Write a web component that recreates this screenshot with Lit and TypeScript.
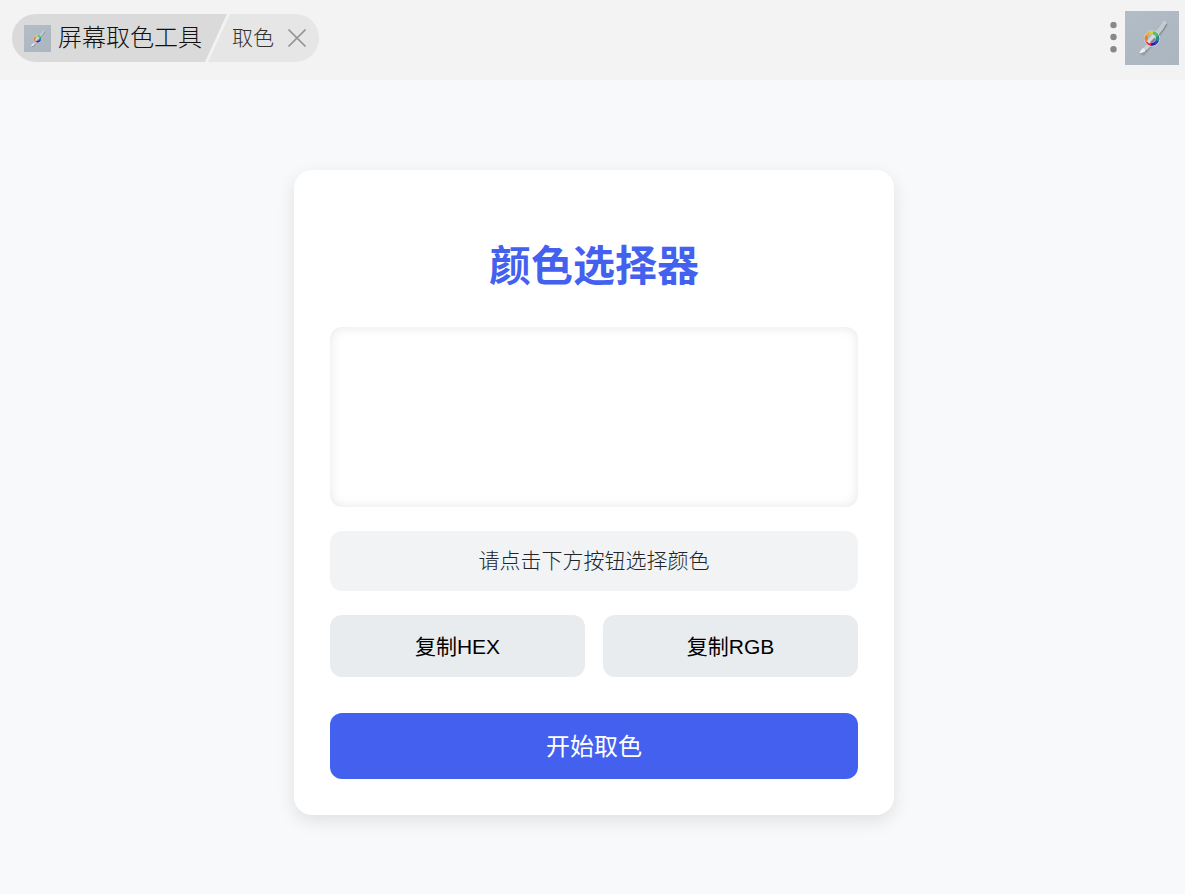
import { LitElement, html, css } from "lit";
import { customElement } from "lit/decorators.js";

@customElement("brush-logo")
class BrushLogo extends LitElement {
  static styles = css`
    :host { display: block; flex: none; }
    svg { display: block; width: 100%; height: 100%; }
  `;

  render() {
    return html`
      <svg viewBox="0 0 54 54" aria-hidden="true">
        <defs>
          <linearGradient id="bg" x1="0" y1="0" x2="0.6" y2="1">
            <stop offset="0" stop-color="#b3bdc8" />
            <stop offset="1" stop-color="#acb6c1" />
          </linearGradient>
          <filter id="soft" x="-30%" y="-30%" width="160%" height="160%">
            <feGaussianBlur stdDeviation="0.9" />
          </filter>
        </defs>
        <rect width="54" height="54" fill="url(#bg)" />
        <path d="M40 13 L30 28 L18 42" fill="none" stroke="#77818b" stroke-width="4.500" stroke-linecap="round" opacity="0.6" filter="url(#soft)" />
        <path d="M39.500 12 L36.500 17 L28 27.500" fill="none" stroke="#c3cad0" stroke-width="4.800" stroke-linecap="round" />
        <path d="M41.500 13.500 L38.500 18.500 L31 28" fill="none" stroke="#818a93" stroke-width="1.200" stroke-linecap="round" />
        <path d="M24 31 L29 32 C26 36 23 39 20 40.500 C18 41.500 16 42.200 14.300 42 C15.500 39.500 17 37.500 19.500 35.500 Z" fill="#c9cfd4" />
        <path d="M14.300 42 C15.500 39.500 17 37.500 19 37 L20.500 40 C18 41.500 16 42.200 14.300 42 Z" fill="#eceff1" />
        <path d="M29 32 C26 36 23 39 20 40.500" fill="none" stroke="#818a93" stroke-width="1" />
        <g transform="translate(27 27.500)" fill="none">
          <circle r="7.700" stroke="#ccd2d6" stroke-width="1" />
          <g stroke-width="3">
            <path d="M-5.200 -2.600 A5.800 5.800 0 0 1 -2.500 -5.230" stroke="#f0ad35" />
            <path d="M-2.500 -5.230 A5.800 5.800 0 0 1 2 -5.450" stroke="#d5d43a" />
            <path d="M2 -5.450 A5.800 5.800 0 0 1 5.450 -2" stroke="#3dba58" />
            <path d="M5.450 -2 A5.800 5.800 0 0 1 5.450 2" stroke="#1b8f93" />
            <path d="M5.450 2 A5.800 5.800 0 0 1 3.500 4.630" stroke="#1c48c4" />
            <path d="M3.500 4.630 A5.800 5.800 0 0 1 -1 5.710" stroke="#2f1fa8" />
            <path d="M-1 5.710 A5.800 5.800 0 0 1 -4.800 3.250" stroke="#e0224e" />
            <path d="M-4.800 3.250 A5.800 5.800 0 0 1 -5.200 -2.600" stroke="#f07a35" />
          </g>
          <path d="M3 -4.500 L-0.500 0 L-4 4" stroke="#d3d9dd" stroke-width="3.600" />
          <path d="M3 0 L-1 4" stroke="#7f8992" stroke-width="1.800" />
          <path d="M1 -5.700 A5.800 5.800 0 0 1 5 -2.900" stroke="#52c065" stroke-width="3" />
        </g>
      </svg>
    `;
  }
}

@customElement("app-root")
class AppRoot extends LitElement {
  static styles = css`
    :host {
      display: flex;
      flex-direction: column;
      min-height: 100vh;
      background: #f8f9fb;
      font-family: "Liberation Sans", "Noto Sans CJK SC", sans-serif;
      color: #111;
    }
    * { box-sizing: border-box; }
    button { font: inherit; border: 0; cursor: pointer; }
    .bar {
      display: flex;
      align-items: center;
      justify-content: space-between;
      height: 80px;
      padding: 0 6px 4px 12px;
      background: #f3f3f3;
    }
    .pill {
      display: flex;
      height: 48px;
      border-radius: 24px;
      overflow: hidden;
      font-weight: 300;
      line-height: 50px;
    }
    .plugin {
      display: flex;
      align-items: center;
      gap: 7px;
      padding: 0 25px 0 12px;
      background: #dadada;
      clip-path: polygon(0 0, 100% 0, calc(100% - 22px) 100%, 0 100%);
      font-size: 24px;
    }
    .plugin brush-logo { width: 27px; height: 27px; }
    .command {
      display: flex;
      align-items: center;
      gap: 14px;
      margin-left: -19px;
      padding: 0 13px 0 24px;
      background: #e6e6e6;
      clip-path: polygon(22px 0, 100% 0, 100% 100%, 0 100%);
      font-size: 21px;
      color: #333;
    }
    .close { display: block; padding: 0; background: none; }
    .close svg { display: block; width: 18px; height: 18px; }
    .actions { display: flex; align-items: center; gap: 8px; }
    .more { padding: 0; background: none; }
    .more svg { display: block; width: 7px; height: 32px; }
    .actions brush-logo { width: 54px; height: 54px; }

    main {
      display: flex;
      flex: 1;
      justify-content: center;
      align-items: flex-start;
      padding: 90px 12px 36px 15px;
    }
    .card {
      width: 100%;
      max-width: 600px;
      padding: 36px;
      border-radius: 18px;
      background: #fff;
      box-shadow: 0 6px 18px rgba(0, 0, 0, 0.1);
      text-align: center;
    }
    h1 {
      margin: 30px 0;
      font-size: 42px;
      line-height: 61px;
      font-weight: 700;
      color: #4361ee;
    }
    .preview {
      height: 180px;
      border-radius: 12px;
      background: #fff;
      box-shadow: inset 0 0 12px rgba(0, 0, 0, 0.1);
    }
    .value {
      display: block;
      margin-top: 24px;
      padding: 15px;
      border-radius: 12px;
      background: #f1f3f5;
      font-size: 21px;
      line-height: 30px;
      font-weight: 300;
      color: #212529;
    }
    .copy {
      display: grid;
      grid-template-columns: 1fr 1fr;
      gap: 18px;
      margin: 24px 0 36px;
    }
    .copy button {
      padding: 17px 16px 15px;
      border-radius: 12px;
      background: #e9ecef;
      font-size: 21px;
      line-height: 30px;
      color: #000;
    }
    .start {
      display: block;
      width: 100%;
      padding: 17px 16px 15px;
      border-radius: 12px;
      background: #4361ee;
      font-size: 24px;
      line-height: 34px;
      color: #fff;
    }
  `;

  render() {
    return html`
      <header class="bar">
        <div class="pill">
          <div class="plugin"><brush-logo></brush-logo><span>屏幕取色工具</span></div>
          <div class="command">
            <span>取色</span>
            <button class="close" aria-label="关闭">
              <svg viewBox="0 0 18 18" fill="none" stroke="#969696" stroke-width="1.600">
                <path d="M0.500 0.500 L17.500 17.500 M17.500 0.500 L0.500 17.500" />
              </svg>
            </button>
          </div>
        </div>
        <div class="actions">
          <button class="more" aria-label="更多">
            <svg viewBox="0 0 7 32" fill="#888">
              <circle cx="3.500" cy="3" r="3.200" />
              <circle cx="3.500" cy="15" r="3.200" />
              <circle cx="3.500" cy="27.200" r="3.200" />
            </svg>
          </button>
          <brush-logo></brush-logo>
        </div>
      </header>
      <main>
        <section class="card">
          <h1>颜色选择器</h1>
          <div class="preview"></div>
          <output class="value">请点击下方按钮选择颜色</output>
          <div class="copy">
            <button>复制HEX</button>
            <button>复制RGB</button>
          </div>
          <button class="start">开始取色</button>
        </section>
      </main>
    `;
  }
}
